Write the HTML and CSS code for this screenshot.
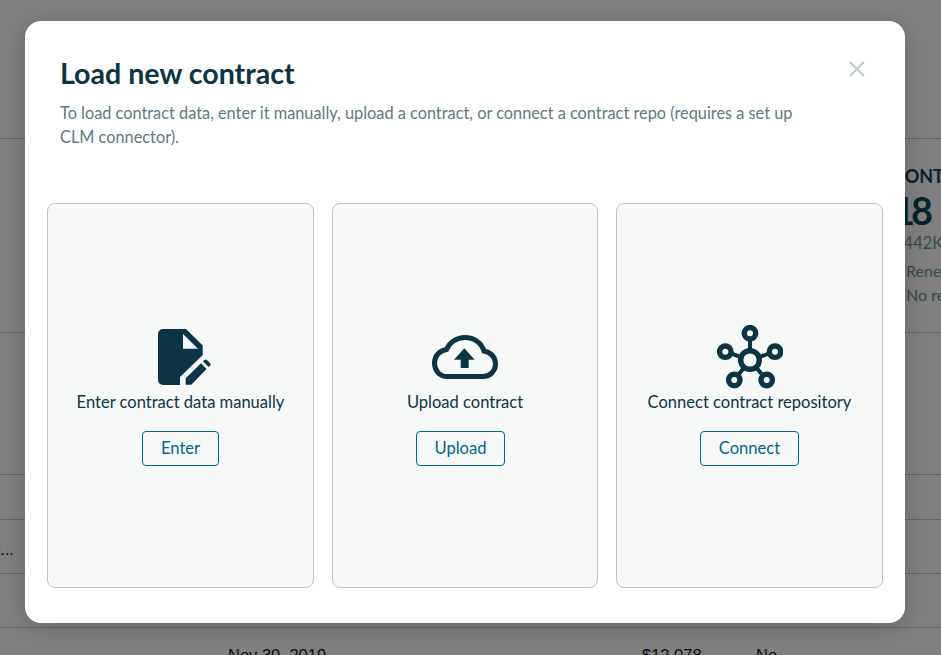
FILE: index.html
```html
<!DOCTYPE html>
<html lang="en">
<head>
<meta charset="utf-8">
<title>Load new contract</title>
<link rel="stylesheet" href="styles.css">
</head>
<body>
<main class="page">
  <section class="band band-head"></section>
  <section class="band band-summary">
    <div class="summary">
      <div class="summary-title">CONTRACTS</div>
      <div class="summary-num">18</div>
      <div class="summary-sub">$442K</div>
      <div class="summary-line">Renewal</div>
      <div class="summary-line">No renewal</div>
    </div>
  </section>
  <section class="band band-mid"></section>
  <section class="band band-th"></section>
  <section class="band band-row"><span class="ellipsis">Contract...</span></section>
  <section class="band band-row2"></section>
  <section class="band band-last">
    <span class="cell-date">Nov 30, 2019</span>
    <span class="cell-amount">$12,078</span>
    <span class="cell-flag">No</span>
  </section>
</main>
<div class="modal" role="dialog" aria-labelledby="modal-title">
  <header class="modal-head">
    <div class="modal-text">
      <h1 class="modal-title" id="modal-title">Load new contract</h1>
      <p class="modal-desc">To load contract data, enter it manually, upload a contract, or connect a contract repo (requires a set up CLM connector).</p>
    </div>
    <button class="close" aria-label="Close">
      <svg width="16" height="16" viewBox="0 0 16 16"><path d="M1 1L15 15M15 1L1 15" fill="none" stroke="#b9cbcf" stroke-width="2"/></svg>
    </button>
  </header>
  <div class="cards">
    <article class="card">
      <div class="card-icon icon-doc">
        <svg width="54" height="56" viewBox="0 0 54 56">
          <path fill="#0b3544" d="M5 0H28L44.7 16.5V26L22 48V56H5A5 5 0 0 1 0 51V5A5 5 0 0 1 5 0Z"/>
          <path fill="#f7f9f9" d="M25 5L40 19.7H25Z"/>
          <path fill="#0b3544" d="M27.7 55.7V49.3L43 34.3L48.6 39.9L33.3 55.7Z"/>
          <path fill="#0b3544" d="M45 32.3L46.4 31A1.8 1.8 0 0 1 48.9 31L52.1 34.2A1.8 1.8 0 0 1 52.1 36.7L50.7 38Z"/>
        </svg>
      </div>
      <div class="card-label">Enter contract data manually</div>
      <button class="btn">Enter</button>
    </article>
    <article class="card">
      <div class="card-icon">
        <svg width="66" height="44" viewBox="0 0 66 44">
          <path fill="none" stroke="#0b3544" stroke-width="5" d="M15 41.5C7.5 41.5 2.5 35.5 2.5 28C2.5 21 7.5 15.5 14.5 14.5C18 7 25 2.5 33 2.5C42 2.5 49.5 8 52 16C58.5 17 63.5 22 63.5 29C63.5 36 58 41.5 51 41.5Z"/>
          <path fill="#0b3544" d="M32.3 13.3L42.7 24.7H36.7V33H28.7V24.7H22Z"/>
        </svg>
      </div>
      <div class="card-label">Upload contract</div>
      <button class="btn btn-upload">Upload</button>
    </article>
    <article class="card">
      <div class="card-icon">
        <svg width="66" height="64" viewBox="0 0 66 64">
          <g fill="none" stroke="#0b3544">
            <path stroke-width="4" d="M33 35V8.3M33 35L8.3 26.7M33 35L58 26.7M33 35L17.3 55M33 35L49.7 55"/>
            <g fill="#f7f9f9" stroke-width="5.4">
              <circle cx="33" cy="35" r="9.3"/>
              <circle cx="33" cy="8.3" r="5.7"/>
              <circle cx="8.3" cy="26.7" r="5.7"/>
              <circle cx="58" cy="26.7" r="5.7"/>
              <circle cx="17.3" cy="55" r="5.7"/>
              <circle cx="49.7" cy="55" r="5.7"/>
            </g>
          </g>
        </svg>
      </div>
      <div class="card-label">Connect contract repository</div>
      <button class="btn">Connect</button>
    </article>
  </div>
</div>
</body>
</html>
```
FILE: styles.css
```css
* { box-sizing: border-box; }
html, body { margin: 0; height: 100%; overflow: hidden; }
body { background: #808080; font-family: Lato, "Noto Sans", sans-serif; color: #0b3544; }

.page { height: 655px; overflow: hidden; color: #0c0f10; }
.band { border-bottom: 1px solid #646464; position: relative; }
.band-head { height: 139px; }
.band-summary { height: 194px; display: flex; justify-content: flex-end; overflow: hidden; }
.band-mid { height: 142px; }
.band-th { height: 45px; }
.band-row { height: 54px; display: flex; align-items: center; padding-top: 6px; }
.band-row2 { height: 54px; }
.band-last { border-bottom: 0; height: 27px; overflow: hidden; display: flex; font-family: "Liberation Sans", Arial, sans-serif; font-size: 16.5px; padding: 18px 0 0 228px; line-height: 18px; }

.summary { width: 59px; padding-top: 25px; white-space: nowrap; flex: none; }
.summary-title { font-size: 18px; font-weight: 700; line-height: 24px; color: #06242e; margin-left: 11px; }
.summary-num { font-size: 38px; font-weight: 700; line-height: 44px; color: #06242e; margin-left: 11px; letter-spacing: -4px; }
.summary-sub { font-size: 16.5px; line-height: 20px; margin-top: 1px; color: #3a4a4e; margin-left: 12px; }
.summary-line { font-size: 16px; line-height: 24px; color: #3a4a4e; margin-left: 24px; }
.summary-sub + .summary-line { margin-top: 6px; }

.ellipsis { font-family: "Liberation Sans", Arial, sans-serif; font-size: 16px; margin-left: -60px; }
.cell-date { width: 414px; flex: none; }
.cell-amount { width: 114px; flex: none; }

.modal {
  position: absolute; left: 25px; top: 21px; width: 880px; height: 602px;
  background: #fff; border-radius: 16px; box-shadow: 0 4px 24px rgba(0,0,0,.2);
  padding: 0 22px; display: flex; flex-direction: column;
}
.modal-head { display: flex; justify-content: space-between; align-items: flex-start; padding: 33px 0 0 13px; height: 182px; }
.modal-text { width: 745px; }
.modal-title { margin: 0; font-size: 28.6px; line-height: 38px; font-weight: 700; color: #0b3544; }
.modal-desc { margin: 9px 0 0; font-size: 16.32px; line-height: 24px; color: #5e7a80; }
.close { border: 0; background: none; padding: 0; margin: 7px 18px 0 0; width: 16px; height: 16px; display: block; }
.close svg { display: block; }

.cards { display: grid; grid-template-columns: 267px 266px 267px; column-gap: 18px; height: 385px; }
.card { background: #f7f9f9; border: 1px solid #bdc3c4; border-radius: 8px; display: flex; flex-direction: column; align-items: center; justify-content: center; }
.card-icon { height: 64px; display: flex; align-items: center; justify-content: center; }
.card-icon svg { display: block; }
.icon-doc { margin-left: 9px; }
.card-label { font-size: 16.55px; line-height: 24px; margin-top: 1px; color: #0b3544; }
.btn { margin-top: 17px; height: 35px; padding: 0 17.5px 2px; min-width: 77px; background: transparent; border: 1px solid #00688a; border-radius: 4px; color: #00688a; font: 16.6px/24px Lato, "Noto Sans", sans-serif; }
.btn-upload { margin-right: 9px; }
```
